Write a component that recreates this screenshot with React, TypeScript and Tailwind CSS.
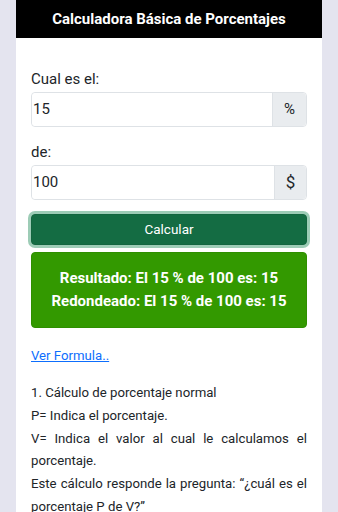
export default function App() {
  return (
    <div className="min-h-[512px] bg-[#e4e4ef] font-['Roboto',sans-serif] text-[#212529]">
      <div className="mx-4 min-h-[512px] bg-white">
        <div className="flex h-[38px] items-center justify-center bg-black">
          <h1 className="text-[15px] font-bold text-white">Calculadora Básica de Porcentajes</h1>
        </div>

        <div className="px-[15px] pt-[30px]">
          <label className="mb-[2px] block text-[15px] leading-[22px]">Cual es el:</label>
          <div className="flex h-[35px] rounded border border-[#dee2e6]">
            <input
              defaultValue="15"
              className="min-w-0 flex-1 rounded-l bg-white px-[1px] text-[15px] outline-none"
            />
            <span className="flex w-[34px] items-center justify-center rounded-r border-l border-[#dee2e6] bg-[#e9ecef] text-[15px]">%</span>
          </div>

          <label className="mt-[14px] mb-[2px] block text-[15px] leading-[22px]">de:</label>
          <div className="flex h-[35px] rounded border border-[#dee2e6]">
            <input
              defaultValue="100"
              className="min-w-0 flex-1 rounded-l bg-white px-[1px] text-[15px] outline-none"
            />
            <span className="flex w-[32px] items-center justify-center rounded-r border-l border-[#dee2e6] bg-[#e9ecef] text-[17px]">$</span>
          </div>

          <button className="mt-[14px] h-[31px] w-full rounded border border-[#13653f] bg-[#146c43] text-[13.5px] text-white ring-[3px] ring-[#9dccb6]">
            Calcular
          </button>

          <div className="mt-[7px] flex h-[76px] flex-col items-center justify-center rounded border border-[#2f8f00] bg-[#339900] text-[15px] font-bold leading-[23px] text-white">
            <p>Resultado: El 15 % de 100 es: 15</p>
            <p>Redondeado: El 15 % de 100 es: 15</p>
          </div>

          <a href="#" className="mt-[18px] inline-block text-[13.2px] text-[#0d6efd] underline">Ver Formula..</a>

          <div className="mt-[15px] text-justify text-[13.2px] leading-[22.8px]">
            <p>1. Cálculo de porcentaje normal</p>
            <p>P= Indica el porcentaje.</p>
            <p>V= Indica el valor al cual le calculamos el porcentaje.</p>
            <p>Este cálculo responde la pregunta: “¿cuál es el porcentaje P de V?”</p>
          </div>
        </div>
      </div>
    </div>
  );
}
